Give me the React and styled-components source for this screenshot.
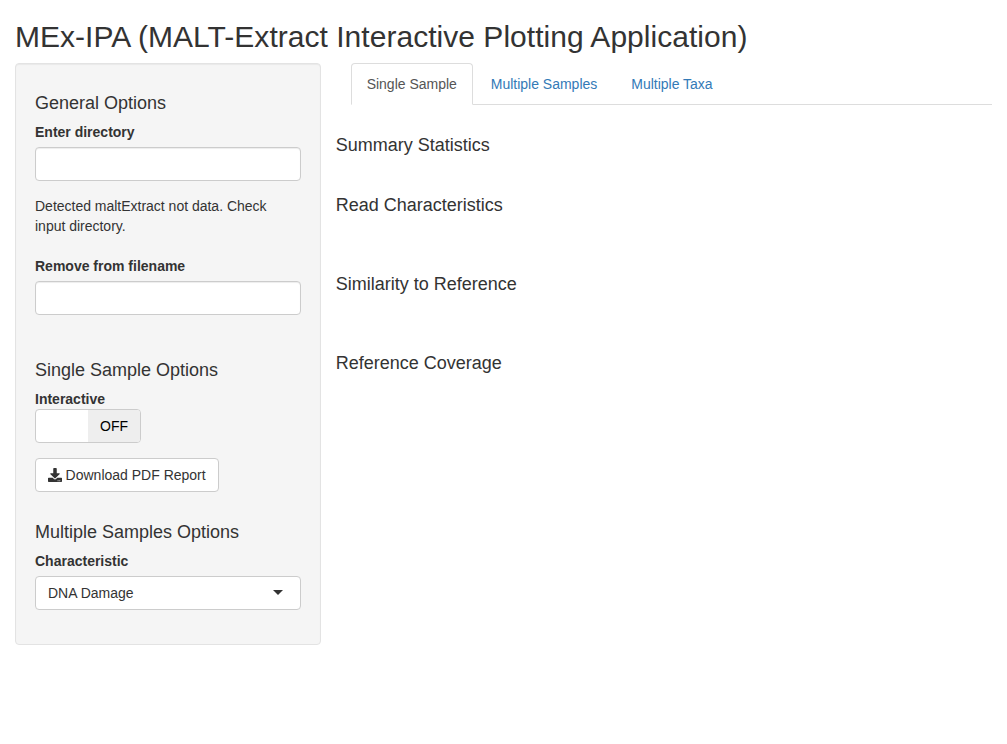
import React from "react";
import styled, { createGlobalStyle } from "styled-components";
import { FaDownload } from "react-icons/fa";

const GlobalStyle = createGlobalStyle`
  *, *::before, *::after { box-sizing: border-box; }
  body {
    margin: 0;
    background: #fff;
    color: #333;
    font: 14px/20px "Liberation Sans", Arial, sans-serif;
  }
`;

const Page = styled.div`
  padding: 20px 15px 0;
`;

const Title = styled.h2`
  margin: 0 0 10px;
  font-size: 30px;
  font-weight: 500;
  line-height: 33px;
  letter-spacing: 0.03px;
`;

const Columns = styled.div`
  display: flex;
  align-items: flex-start;
  gap: 15px;
`;

const Sidebar = styled.form`
  flex: 0 0 305.66px;
  padding: 19px;
  background: #f5f5f5;
  border: 1px solid #e3e3e3;
  border-radius: 4px;
  box-shadow: inset 0 1px 1px rgba(0, 0, 0, 0.05);
`;

const Heading = styled.h4`
  margin: ${(p) => p.$top || 10}px 0 8px;
  font-size: 18px;
  font-weight: 500;
  line-height: 21px;
`;

const Group = styled.div`
  margin-bottom: 15px;
`;

const Label = styled.label`
  display: block;
  margin-bottom: ${(p) => (p.$tight ? 0 : 5)}px;
  font-weight: 700;
`;

const TextInput = styled.input`
  display: block;
  width: 100%;
  height: 34px;
  padding: 6px 12px;
  font: inherit;
  color: #555;
  background: #fff;
  border: 1px solid #ccc;
  border-radius: 4px;
  box-shadow: inset 0 1px 1px rgba(0, 0, 0, 0.075);
`;

const Message = styled.div`
  margin-bottom: 20px;
  padding-right: 10px;
  letter-spacing: -0.01px;
`;

const Switch = styled.div`
  display: flex;
  width: 106px;
  height: 34px;
  overflow: hidden;
  background: #fff;
  border: 1px solid #ccc;
  border-radius: 4px;
`;

const SwitchHandle = styled.span`
  flex: 1;
`;

const SwitchLabel = styled.span`
  flex: 1;
  padding: 6px 0;
  text-align: center;
  color: #000;
  background: #eee;
`;

const Button = styled.button`
  display: flex;
  align-items: center;
  gap: 3.6px;
  width: 184px;
  height: 34px;
  padding: 6px 12px;
  font: inherit;
  color: #333;
  white-space: nowrap;
  background: #fff;
  border: 1px solid #ccc;
  border-radius: 4px;
`;

const Select = styled.div`
  display: flex;
  align-items: center;
  justify-content: space-between;
  height: 34px;
  padding: 6px 17px 6px 12px;
  background: #fff;
  border: 1px solid #ccc;
  border-radius: 4px;
`;

const Caret = styled.span`
  margin-bottom: 2px;
  border: 5px solid transparent;
  border-top-color: #333;
  border-bottom: 0;
`;

const Main = styled.main`
  flex: 1;
  min-width: 0;
`;

const Tabs = styled.ul`
  display: flex;
  gap: 2px;
  margin: 0 0 30px 15px;
  padding: 0;
  list-style: none;
  border-bottom: 1px solid #ddd;
`;

const Tab = styled.li`
  margin-bottom: -1px;
  padding: 10px 15px;
  color: ${(p) => (p.$active ? "#555" : "#337ab7")};
  background: ${(p) => (p.$active ? "#fff" : "transparent")};
  border: 1px solid;
  border-color: ${(p) => (p.$active ? "#ddd #ddd #fff" : "transparent")};
  border-radius: 4px 4px 0 0;
  letter-spacing: -0.01px;
`;

const Section = styled.section`
  height: ${(p) => p.$height}px;
`;

const SectionTitle = styled(Heading)`
  margin: 0;
`;

const sections = [
  ["Summary Statistics", 60],
  ["Read Characteristics", 79],
  ["Similarity to Reference", 79],
  ["Reference Coverage", 79],
];

export default function App() {
  return (
    <>
      <GlobalStyle />
      <Page>
        <Title>MEx-IPA (MALT-Extract Interactive Plotting Application)</Title>
        <Columns>
          <Sidebar>
            <Heading>General Options</Heading>
            <Group>
              <Label htmlFor="dir">Enter directory</Label>
              <TextInput id="dir" />
            </Group>
            <Message>Detected maltExtract not data. Check input directory.</Message>
            <Group>
              <Label htmlFor="remove">Remove from filename</Label>
              <TextInput id="remove" />
            </Group>
            <Heading $top={45}>Single Sample Options</Heading>
            <Group>
              <Label $tight>Interactive</Label>
              <Switch>
                <SwitchHandle />
                <SwitchLabel>OFF</SwitchLabel>
              </Switch>
            </Group>
            <Button type="button">
              <FaDownload size={14} />
              Download PDF Report
            </Button>
            <Heading $top={30}>Multiple Samples Options</Heading>
            <Group>
              <Label>Characteristic</Label>
              <Select>
                DNA Damage
                <Caret />
              </Select>
            </Group>
          </Sidebar>
          <Main>
            <Tabs>
              <Tab $active>Single Sample</Tab>
              <Tab>Multiple Samples</Tab>
              <Tab>Multiple Taxa</Tab>
            </Tabs>
            {sections.map(([title, height]) => (
              <Section key={title} $height={height}>
                <SectionTitle>{title}</SectionTitle>
              </Section>
            ))}
          </Main>
        </Columns>
      </Page>
    </>
  );
}
